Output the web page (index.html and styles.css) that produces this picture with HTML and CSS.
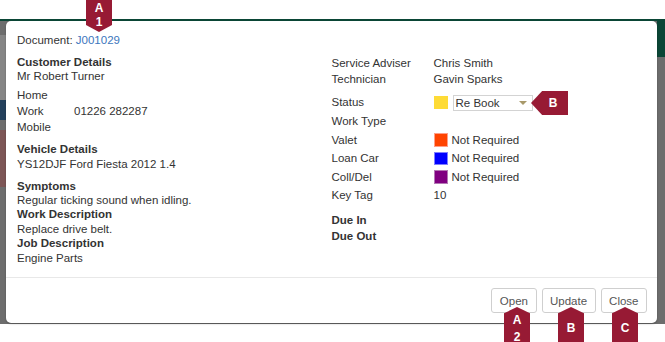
FILE: index.html
```html
<!DOCTYPE html>
<html>
<head>
<meta charset="utf-8">
<link rel="stylesheet" href="styles.css">
</head>
<body>
<div class="topstrip"></div>
<div class="backdrop">
  <div class="modal">
    <div class="modal-body">
      <div class="doc">Document: <a class="link">J001029</a></div>
      <div class="cols">
        <div class="col-left">
          <section class="sec">
            <div class="h">Customer Details</div>
            <div>Mr Robert Turner</div>
            <div class="phones">
              <div class="phone"><span class="plabel">Home</span><span></span></div>
              <div class="phone"><span class="plabel">Work</span><span>01226 282287</span></div>
              <div class="phone"><span class="plabel">Mobile</span><span></span></div>
            </div>
          </section>
          <section class="sec">
            <div class="h">Vehicle Details</div>
            <div>YS12DJF Ford Fiesta 2012 1.4</div>
          </section>
          <section class="sec">
            <div class="h">Symptoms</div>
            <div>Regular ticking sound when idling.</div>
            <div class="h">Work Description</div>
            <div>Replace drive belt.</div>
            <div class="h">Job Description</div>
            <div>Engine Parts</div>
          </section>
        </div>
        <div class="col-right">
          <div class="kv"><span>Service Adviser</span><span>Chris Smith</span></div>
          <div class="kv"><span>Technician</span><span>Gavin Sparks</span></div>
          <div class="kv status"><span>Status</span><span class="val"><i class="sq yellow"></i><span class="select">Re Book<b class="caret"></b></span></span></div>
          <div class="kv tall"><span>Work Type</span><span></span></div>
          <div class="kv tall"><span>Valet</span><span class="val"><i class="sq orange"></i>Not Required</span></div>
          <div class="kv tall"><span>Loan Car</span><span class="val"><i class="sq blue"></i>Not Required</span></div>
          <div class="kv tall"><span>Coll/Del</span><span class="val"><i class="sq purple"></i>Not Required</span></div>
          <div class="kv tall"><span>Key Tag</span><span>10</span></div>
          <div class="kv due"><span class="b">Due In</span><span></span></div>
          <div class="kv"><span class="b">Due Out</span><span></span></div>
        </div>
      </div>
    </div>
    <div class="modal-footer">
      <button class="btn">Open</button>
      <button class="btn">Update</button>
      <button class="btn">Close</button>
    </div>
  </div>
</div>

<div class="marker down m-a1"><span>A</span><span>1</span></div>
<div class="marker left m-b1"><span>B</span></div>
<div class="marker up m-a2"><span>A</span><span>2</span></div>
<div class="marker up m-b2"><span>B</span></div>
<div class="marker up m-c"><span>C</span></div>
</body>
</html>
```

FILE: styles.css
```css
html, body {
  margin: 0;
  padding: 0;
}
body {
  position: relative;
  width: 665px;
  height: 342px;
  overflow: hidden;
  background: #fff;
  font-family: "Liberation Sans", Arial, sans-serif;
  font-size: 11.5px;
  line-height: 14.4px;
  color: #333;
}
.topstrip {
  height: 19px;
  background: #fff;
}
.backdrop {
  height: 305px;
  box-sizing: border-box;
  padding: 2px 8px 0 6px;
  background:
    linear-gradient(#0b4636, #0b4636) left top / 100% 2px no-repeat,
    linear-gradient(#0b4636, #0b4636) right top / 8px 38px no-repeat,
    linear-gradient(#24405c, #24405c) left 81px / 6px 20px no-repeat,
    linear-gradient(#7d5656, #7d5656) left 111px / 6px 57px no-repeat,
    linear-gradient(#858585, #858585) left 16px / 6px 65px no-repeat,
    #6d6d6d;
}
.modal {
  height: 302px;
  background: #fff;
  border-radius: 5px;
  box-shadow: 0 1px 2px rgba(0,0,0,0.25);
  display: flex;
  flex-direction: column;
}
.modal-body {
  flex: 1;
  padding: 12px 11px 0;
}
.link {
  color: #3c76bd;
  text-decoration: none;
}
.cols {
  margin-top: 7.6px;
  display: grid;
  grid-template-columns: 1fr 1fr;
}
.h, .b {
  font-weight: bold;
}
.sec + .sec {
  margin-top: 7.5px;
}
.phones {
  margin-top: 3px;
}
.phone {
  display: flex;
  height: 16px;
  line-height: 16px;
}
.plabel {
  width: 57px;
}
.kv {
  display: grid;
  grid-template-columns: 102px 1fr;
  height: 16px;
  line-height: 16px;
  align-items: center;
}
.kv.status {
  height: 19px;
  line-height: 19px;
  margin-top: 6px;
}
.kv.tall {
  height: 18.5px;
  line-height: 18.5px;
}
.kv.due {
  margin-top: 7.7px;
}
.val {
  display: flex;
  align-items: center;
}
.sq {
  display: block;
  width: 14px;
  height: 13.5px;
  box-sizing: border-box;
  margin-right: 4px;
  border: 1px solid rgba(255,255,255,0.45);
}
.yellow { background: #fedb36; border-color: #fedb36; margin-right: 5px; }
.orange { background: #ff4400; border-color: #ff9f88; }
.blue { background: #0000ff; border-color: #7f7fff; }
.purple { background: #800080; border-color: #b479b4; }
.select {
  position: relative;
  display: block;
  width: 80px;
  height: 16px;
  line-height: 14px;
  box-sizing: border-box;
  border: 1px solid #d3d3d3;
  padding-left: 2px;
  background: #fff;
}
.caret {
  position: absolute;
  right: 5px;
  top: 5px;
  width: 0;
  height: 0;
  border-left: 4px solid transparent;
  border-right: 4px solid transparent;
  border-top: 4px solid #a8996a;
}
.modal-footer {
  border-top: 1px solid #e8e8e8;
  padding: 10px 10px 10px;
  display: flex;
  justify-content: flex-end;
  gap: 5px;
}
.btn {
  height: 25px;
  padding: 0 7.5px;
  border: 1px solid #cfcfcf;
  border-radius: 3px;
  background: #fff;
  color: #555;
  font-family: "Liberation Sans", Arial, sans-serif;
  font-size: 11.5px;
}
.marker {
  position: absolute;
  background: #971a34;
  color: #fff;
  font-family: "Liberation Sans", Arial, sans-serif;
  font-weight: bold;
  font-size: 12px;
  line-height: 10px;
  display: flex;
  flex-direction: column;
  align-items: center;
}
.marker.down {
  left: 86px;
  top: 0;
  width: 26px;
  height: 32px;
  padding-top: 2.5px;
  box-sizing: border-box;
  clip-path: polygon(0 0, 100% 0, 100% 78%, 50% 100%, 0 78%);
}
.m-a1 span + span { margin-top: 4px; }
.marker.left {
  left: 531px;
  top: 91px;
  width: 37px;
  height: 24px;
  justify-content: center;
  padding-left: 7px;
  box-sizing: border-box;
  clip-path: polygon(0 50%, 30% 0, 100% 0, 100% 100%, 30% 100%);
}
.marker.up {
  top: 307px;
  width: 26px;
  height: 35px;
  box-sizing: border-box;
  clip-path: polygon(50% 0, 100% 18%, 100% 100%, 0 100%, 0 18%);
}
.m-a2 { left: 504px; padding-top: 7.5px; }
.m-a2 span + span { margin-top: 7px; }
.m-b2 { left: 558px; padding-top: 15.5px; }
.m-c { left: 612px; padding-top: 15.5px; }
```
